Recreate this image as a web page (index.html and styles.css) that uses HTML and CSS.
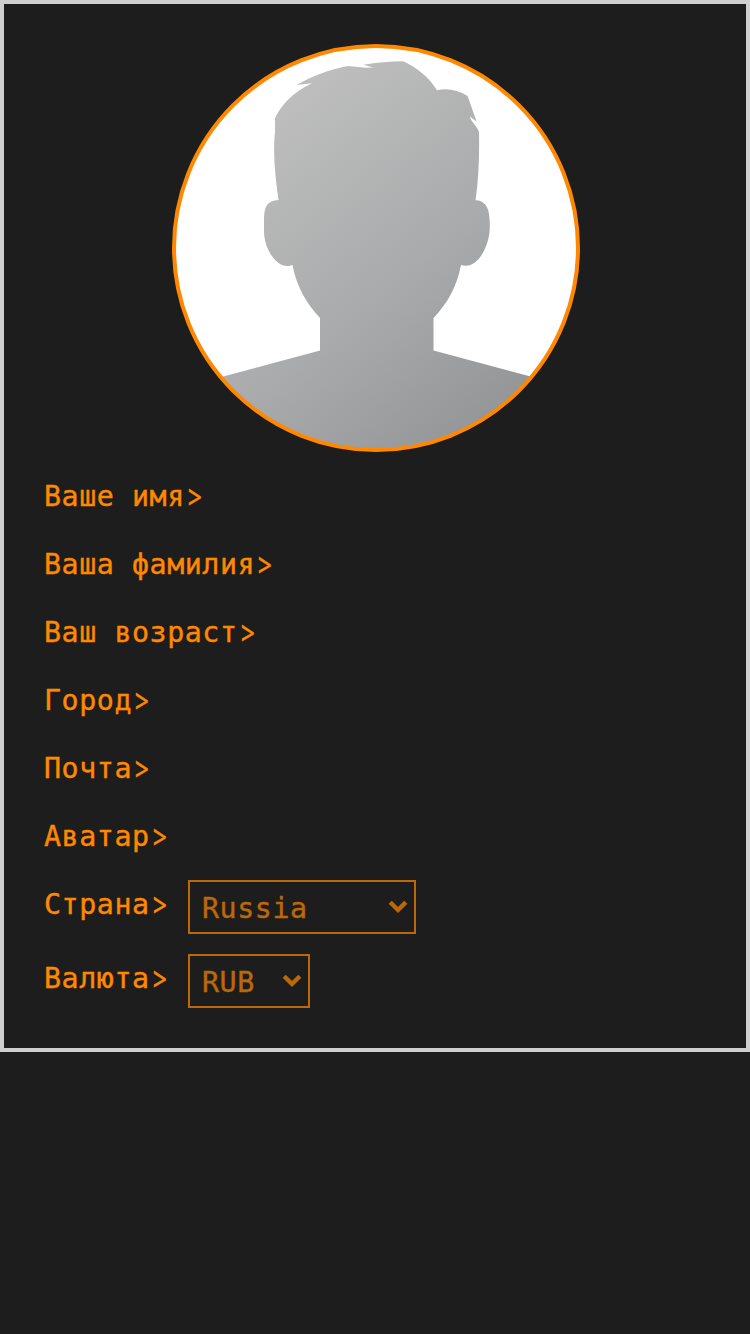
FILE: index.html
```
<!DOCTYPE html>
<html lang="ru">
<head>
<meta charset="utf-8">
<title>Профиль</title>
<link rel="stylesheet" href="styles.css">
</head>
<body>
<main class="profile">
  <svg class="avatar" viewBox="172 44 408 408" role="img" aria-label="Аватар">
    <defs>
      <linearGradient id="shade" gradientUnits="userSpaceOnUse" x1="230" y1="100" x2="520" y2="445">
        <stop offset="0" stop-color="#c1c1c1"/>
        <stop offset=".55" stop-color="#a9aaab"/>
        <stop offset="1" stop-color="#909192"/>
      </linearGradient>
      <clipPath id="round"><circle cx="376" cy="248" r="201"/></clipPath>
    </defs>
    <circle cx="376" cy="248" r="201" fill="#fff"/>
    <path clip-path="url(#round)" fill="url(#shade)" d="M275 118.500C280 106 293 92 312 83.200L296.500 85C311 76.500 329 69.500 348 66L366 67.800L373 67.500L363.500 64.700C376 62.500 390 61.300 403 61.200C417 67.500 429 77 437 90.300C447 87.800 458 90 467.500 96C470.500 104 474 114 476.500 121.500L470 116.500C470.500 121.500 476 124 479 132C479.500 155 478.500 181 475.500 200.200C483 200 489 206 489.300 217C490 222 490 228 489.300 234C487 250 476 270 461 265C457 286 448 303 433.500 318V350.500L540 379V460H210V380L320 350.500V318C306 303 296 285 292.500 265C279 271 264 251 264 231V218C264.500 207 267 200.500 278.500 200C275.500 178 272.500 153 275 132Z"/>
    <circle cx="376" cy="248" r="202" fill="none" stroke="#ff8800" stroke-width="4"/>
  </svg>
  <div class="row"><span class="label">Ваше имя<span class="prompt">&gt;</span></span></div>
  <div class="row"><span class="label">Ваша фамилия<span class="prompt">&gt;</span></span></div>
  <div class="row"><span class="label">Ваш возраст<span class="prompt">&gt;</span></span></div>
  <div class="row"><span class="label">Город<span class="prompt">&gt;</span></span></div>
  <div class="row"><span class="label">Почта<span class="prompt">&gt;</span></span></div>
  <div class="row"><span class="label">Аватар<span class="prompt">&gt;</span></span></div>
  <div class="row">
    <span class="label">Страна<span class="prompt">&gt;</span></span>
    <div class="select select-country"><span>Russia</span><svg class="chevron" viewBox="0 0 20 14"><path d="M2.200 2.200L10 10L17.800 2.200"/></svg></div>
  </div>
  <div class="row">
    <span class="label">Валюта<span class="prompt">&gt;</span></span>
    <div class="select select-currency"><span>RUB</span><svg class="chevron" viewBox="0 0 20 14"><path d="M2.200 2.200L10 10L17.800 2.200"/></svg></div>
  </div>
</main>
</body>
</html>
```
FILE: styles.css
```
* { box-sizing: border-box; }
body {
  margin: 0;
  min-height: 100vh;
  background: #1d1d1d;
  color: #ff8800;
  font: 28.3px/50px "DejaVu Sans Mono", monospace;
  letter-spacing: .56px;
  -webkit-text-stroke: .4px currentColor;
}
.profile {
  display: flex;
  flex-direction: column;
  gap: 20px;
  height: 1052px;
  padding: 40px;
  border: 4px solid #cecfce;
}
.avatar {
  flex: none;
  width: 408px;
  height: 408px;
  margin-left: 128px;
}
.row {
  display: flex;
  align-items: flex-start;
  height: 48px;
}
.row:nth-last-child(-n+2) { height: 54px; }
.label {
  flex: none;
  min-width: 144px;
  white-space: pre;
}
.prompt {
  display: inline-block;
  width: 18px;
  font-family: "Noto Sans", sans-serif;
  font-size: 28px;
  line-height: 1;
  letter-spacing: 0;
  text-align: center;
  transform: translate(.8px, .6px) scale(.88, 1.18);
}
.select {
  display: flex;
  justify-content: space-between;
  height: 54px;
  padding: 2px 6px 0 12px;
  border: 2px solid #bb6808;
  color: #bb6808;
}
.select-country { width: 228px; }
.select-currency { width: 122px; }
.chevron {
  flex: none;
  width: 20px;
  height: 14px;
  margin-top: 16px;
  fill: none;
  stroke: currentColor;
  stroke-width: 4.4;
}
```
